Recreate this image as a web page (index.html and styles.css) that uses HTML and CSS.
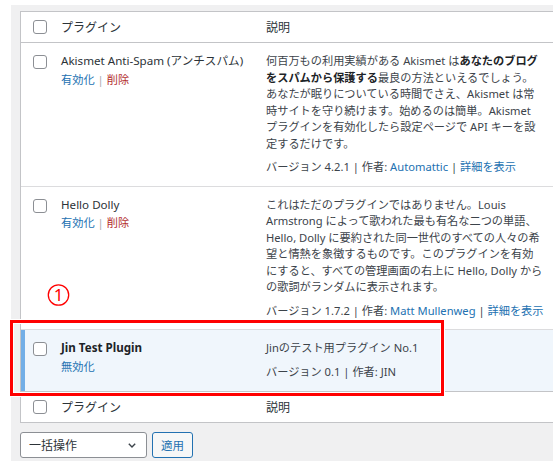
FILE: index.html
```html
<!DOCTYPE html>
<html lang="ja">
<head>
<meta charset="utf-8">
<title>プラグイン</title>
<link rel="stylesheet" href="styles.css">
</head>
<body>
<div class="page">
  <div class="plugins">
    <div class="row head">
      <div class="cell check"><span class="cb"></span></div>
      <div class="cell name">プラグイン</div>
      <div class="cell desc">説明</div>
    </div>

    <div class="row plugin">
      <div class="cell check"><span class="cb"></span></div>
      <div class="cell name">
        <div class="title">Akismet Anti-Spam (アンチスパム)</div>
        <div class="row-actions"><a class="link">有効化</a><span class="sep">|</span><a class="del">削除</a></div>
      </div>
      <div class="cell desc">
        <p>何百万もの利用実績がある Akismet は<strong>あなたのブログ<br>をスパムから保護する</strong>最良の方法といえるでしょう。<br>あなたが眠りについている時間でさえ、Akismet は常<br>時サイトを守り続けます。始めるのは簡単。Akismet<br>プラグインを有効化したら設定ページで API キーを設<br>定するだけです。</p>
        <div class="meta">バージョン 4.2.1 | 作者: <a class="link">Automattic</a> | <a class="link">詳細を表示</a></div>
      </div>
    </div>

    <div class="row plugin">
      <div class="cell check"><span class="cb"></span></div>
      <div class="cell name">
        <div class="title">Hello Dolly</div>
        <div class="row-actions"><a class="link">有効化</a><span class="sep">|</span><a class="del">削除</a></div>
      </div>
      <div class="cell desc">
        <p>これはただのプラグインではありません。Louis<br>Armstrong によって歌われた最も有名な二つの単語、<br>Hello, Dolly に要約された同一世代のすべての人々の希<br>望と情熱を象徴するものです。このプラグインを有効<br>にすると、すべての管理画面の右上に Hello, Dolly から<br>の歌詞がランダムに表示されます。</p>
        <div class="meta">バージョン 1.7.2 | 作者: <a class="link">Matt Mullenweg</a> | <a class="link">詳細を表示</a></div>
      </div>
    </div>

    <div class="row plugin active">
      <div class="cell check"><span class="cb"></span></div>
      <div class="cell name">
        <div class="title"><strong>Jin Test Plugin</strong></div>
        <div class="row-actions"><a class="link">無効化</a></div>
      </div>
      <div class="cell desc">
        <p>Jinのテスト用プラグイン No.1</p>
        <div class="meta">バージョン 0.1 | 作者: JIN</div>
      </div>
    </div>

    <div class="row head foot">
      <div class="cell check"><span class="cb"></span></div>
      <div class="cell name">プラグイン</div>
      <div class="cell desc">説明</div>
    </div>
  </div>

  <div class="bulk">
    <div class="select">
      <span>一括操作</span>
      <svg class="chev" width="8" height="5" viewBox="0 0 8 5"><polyline points="0.8,0.8 4,4 7.2,0.8" fill="none" stroke="#3c434a" stroke-width="1.4"/></svg>
    </div>
    <div class="button">適用</div>
  </div>
</div>

<div class="annot-box"></div>
<svg class="annot-num" width="26" height="24" viewBox="0 0 26 24">
  <circle cx="12.5" cy="11" r="10.2" fill="none" stroke="#ff0000" stroke-width="1.3"/>
  <text x="12.5" y="17.3" text-anchor="middle" font-family="Noto Sans, sans-serif" font-size="17" fill="#ff0000">1</text>
</svg>
</body>
</html>
```

FILE: styles.css
```css
html, body {
  margin: 0;
  padding: 0;
  background: #fff;
  overflow: hidden;
}
body {
  box-sizing: border-box;
  width: 553px;
  height: 471px;
  padding: 5px 0 0 11px;
  position: relative;
  font-family: "Noto Sans", "Noto Sans CJK JP", sans-serif;
  font-size: 11.2px;
  color: #3c434a;
}
.page {
  padding: 6px 0 0 9px;
  height: 450px;
  width: 533px;
  background: #f0f0f1;
}
.plugins {
  background: #fff;
  border: 1px solid #c3c4c7;
  border-right: none;
}
.row {
  display: grid;
  grid-template-columns: 30px 205px 1fr;
}
.cell.check {
  padding-left: 12px;
}
.cb {
  display: block;
  width: 12px;
  height: 12px;
  border: 1px solid #8c8f94;
  border-radius: 3px;
  background: #fff;
}
.cell.name, .cell.desc {
  padding: 0 10px;
}
.head {
  height: 30px;
  align-items: center;
  border-bottom: 1px solid #c3c4c7;
  font-size: 12px;
  color: #2c3338;
}
.head .cell {
  display: flex;
  align-items: center;
}
.foot {
  border-bottom: none;
  border-top: 1px solid #c3c4c7;
}
.plugin {
  padding: 10px 0 10px;
  border-bottom: 1px solid #dcdcde;
  line-height: 16.5px;
}
.plugin .check {
  padding-top: 2px;
}
.plugin.active {
  background: #f0f6fc;
  border-bottom: none;
  padding-bottom: 11px;
}
.plugin.active .check {
  box-shadow: inset 4px 0 0 #72aee6;
  margin-top: -10px;
  margin-bottom: -11px;
  padding-top: 12px;
}
.title {
  color: #2c3338;
  font-size: 11.6px;
}
.title strong {
  font-weight: 700;
  color: #1d2327;
}
.row-actions {
  margin-top: 2px;
}
.link {
  color: #2271b1;
}
.del {
  color: #b32d2e;
}
.sep {
  color: #a7aaad;
  margin: 0 3px;
}
.desc p {
  margin: 0;
  white-space: nowrap;
}
.desc strong {
  font-weight: 700;
  color: #1d2327;
}
.meta {
  margin-top: 7px;
  white-space: nowrap;
}
.bulk {
  display: flex;
  gap: 5px;
  margin-top: 9px;
}
.select {
  box-sizing: border-box;
  width: 127px;
  height: 26px;
  border: 1px solid #8c8f94;
  border-radius: 3px;
  background: #fff;
  display: flex;
  align-items: center;
  justify-content: space-between;
  padding: 0 10px 0 8px;
  color: #2c3338;
  font-size: 12px;
}
.button {
  box-sizing: border-box;
  width: 41px;
  height: 26px;
  border: 1px solid #2271b1;
  border-radius: 3px;
  background: #f6f7f7;
  color: #2271b1;
  display: flex;
  align-items: center;
  justify-content: center;
  font-size: 11.5px;
}
.annot-box {
  position: absolute;
  left: 10px;
  top: 320px;
  width: 428px;
  height: 70px;
  border: 3px solid #ff0000;
  box-shadow: 0 0 0 1px #fff, inset 0 0 0 1px #fff;
}
.annot-num {
  position: absolute;
  left: 46px;
  top: 284px;
  display: block;
}
```
